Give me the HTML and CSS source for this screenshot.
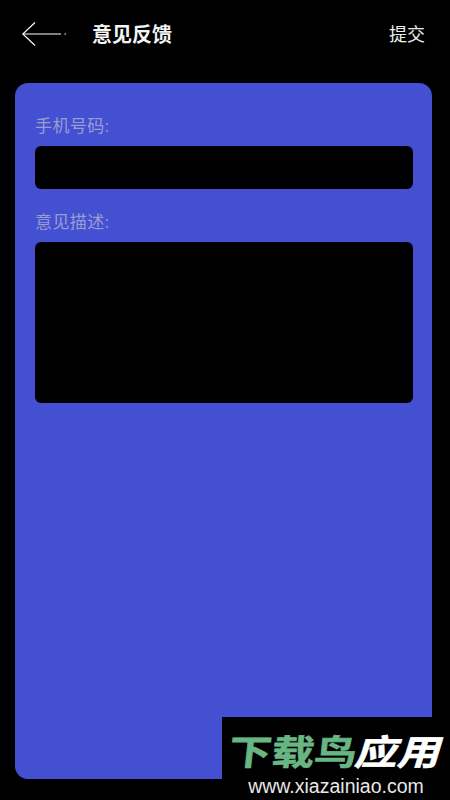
FILE: index.html
```html
<!DOCTYPE html>
<html lang="zh-CN">
<head>
    <meta charset="UTF-8">
    <meta name="viewport" content="width=device-width, initial-scale=1.0">
    <title>意见反馈</title>
    <link rel="stylesheet" href="styles.css">
</head>
<body>
    <div class="page">
        <!-- Header -->
        <header class="header">
            <svg class="back-icon" width="44" height="24" viewBox="0 0 44 24" fill="none" stroke="#fff" stroke-width="1.1">
                <path d="M13 0.5 L0.8 12 L13 23.5"/>
                <path d="M0.8 12 H39"/>
                <path d="M42.5 12 H44"/>
            </svg>
            <h1 class="title">意见反馈</h1>
            <span class="submit">提交</span>
        </header>

        <!-- Form card -->
        <main class="card">
            <label class="field-label">手机号码:</label>
            <div class="input"></div>
            <label class="field-label field-label-second">意见描述:</label>
            <div class="textarea"></div>
        </main>

        <!-- Watermark -->
        <div class="watermark">
            <div class="wm-logo"><span class="wm-green">下载鸟</span><span class="wm-white">应用</span></div>
            <div class="wm-url">www.xiazainiao.com</div>
        </div>
    </div>
</body>
</html>
```
FILE: styles.css
```css
* {
    margin: 0;
    padding: 0;
    box-sizing: border-box;
}

body {
    font-family: "Liberation Sans", "Noto Sans CJK SC", sans-serif;
    background-color: #000;
    color: #fff;
}

.page {
    position: relative;
    width: 450px;
    height: 800px;
    overflow: hidden;
    padding: 0 18px 21px 15px;
    display: flex;
    flex-direction: column;
}

/* Header */
.header {
    height: 83px;
    flex-shrink: 0;
    display: flex;
    align-items: flex-start;
    padding: 22px 7px 0 7px;
}

.back-icon {
    flex-shrink: 0;
}

.title {
    margin: 1px 0 0 26px;
    font-size: 20px;
    line-height: 24px;
    font-weight: 700;
    color: #f4f4f4;
}

.submit {
    margin: 1px 0 0 auto;
    font-size: 18px;
    line-height: 24px;
    color: #eee;
}

/* Form card */
.card {
    flex: 1;
    background-color: #4350d2;
    border-radius: 13px;
    padding: 34px 19px 0 20px;
}

.field-label {
    display: block;
    font-size: 17px;
    line-height: 20px;
    letter-spacing: 0.4px;
    color: #9a9dd0;
}

.field-label-second {
    margin-top: 24px;
}

.input,
.textarea {
    background-color: #000;
    border-radius: 6px;
    margin-top: 9px;
}

.input {
    height: 43px;
}

.textarea {
    height: 161px;
}

/* Watermark */
.watermark {
    position: absolute;
    left: 222px;
    top: 717px;
    width: 228px;
    height: 83px;
    background-color: #000;
    text-align: center;
}

.wm-logo {
    display: flex;
    justify-content: flex-start;
    margin: 16px 0 0 7px;
    font-size: 35px;
    line-height: 40px;
    font-weight: 700;
    white-space: nowrap;
    transform: scaleX(1.22);
    transform-origin: left center;
    -webkit-text-stroke: 0.6px currentColor;
}

.wm-green {
    color: #68b684;
    transform: skewX(-5deg);
}

.wm-white {
    color: #fff;
    transform: skewX(-14deg);
}

.wm-url {
    margin-top: 2px;
    font-size: 19.5px;
    line-height: 22px;
    color: #e8e8e8;
}
```
